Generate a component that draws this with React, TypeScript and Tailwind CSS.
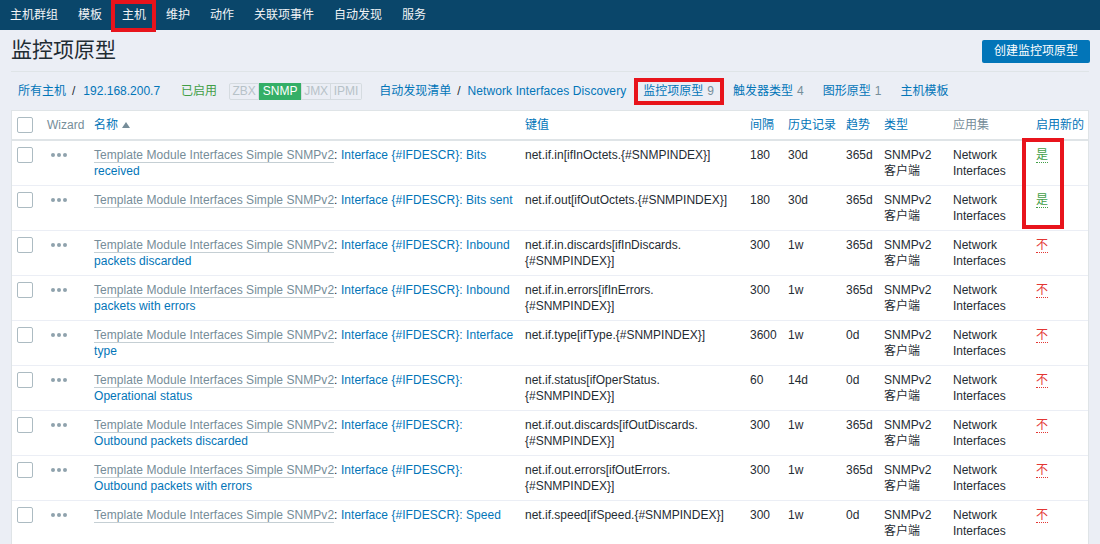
import React from "react";

type Row = {
  name: string;
  key: string;
  interval: string;
  history: string;
  trends: string;
  enabled: boolean;
};

const rows: Row[] = [
  { name: "Interface {#IFDESCR}: Bits received", key: "net.if.in[ifInOctets.{#SNMPINDEX}]", interval: "180", history: "30d", trends: "365d", enabled: true },
  { name: "Interface {#IFDESCR}: Bits sent", key: "net.if.out[ifOutOctets.{#SNMPINDEX}]", interval: "180", history: "30d", trends: "365d", enabled: true },
  { name: "Interface {#IFDESCR}: Inbound packets discarded", key: "net.if.in.discards[ifInDiscards.{#SNMPINDEX}]", interval: "300", history: "1w", trends: "365d", enabled: false },
  { name: "Interface {#IFDESCR}: Inbound packets with errors", key: "net.if.in.errors[ifInErrors.{#SNMPINDEX}]", interval: "300", history: "1w", trends: "365d", enabled: false },
  { name: "Interface {#IFDESCR}: Interface type", key: "net.if.type[ifType.{#SNMPINDEX}]", interval: "3600", history: "1w", trends: "0d", enabled: false },
  { name: "Interface {#IFDESCR}: Operational status", key: "net.if.status[ifOperStatus.{#SNMPINDEX}]", interval: "60", history: "14d", trends: "0d", enabled: false },
  { name: "Interface {#IFDESCR}: Outbound packets discarded", key: "net.if.out.discards[ifOutDiscards.{#SNMPINDEX}]", interval: "300", history: "1w", trends: "365d", enabled: false },
  { name: "Interface {#IFDESCR}: Outbound packets with errors", key: "net.if.out.errors[ifOutErrors.{#SNMPINDEX}]", interval: "300", history: "1w", trends: "365d", enabled: false },
  { name: "Interface {#IFDESCR}: Speed", key: "net.if.speed[ifSpeed.{#SNMPINDEX}]", interval: "300", history: "1w", trends: "0d", enabled: false },
];

const navItems = ["主机群组", "模板", "主机", "维护", "动作", "关联项事件", "自动发现", "服务"];

function Checkbox() {
  return <div className="w-[16px] h-[16px] border border-[#acbbc2] rounded-[2px] bg-white" />;
}

function Dots() {
  return (
    <svg width="16" height="16" viewBox="0 0 16 16" className="block">
      <circle cx="2" cy="8" r="2" fill="#8fa2ad" />
      <circle cx="8" cy="8" r="2" fill="#8fa2ad" />
      <circle cx="14" cy="8" r="2" fill="#8fa2ad" />
    </svg>
  );
}

export default function App() {
  return (
    <div className="w-[1100px] h-[544px] overflow-hidden bg-[#ebeef5] text-[12px] leading-[16px] text-[#1f2c33] font-['Liberation_Sans','Noto_Sans_CJK_SC',Arial,sans-serif]">
      {/* top nav */}
      <nav className="h-[30px] bg-[#0a466a] flex items-stretch">
        {navItems.map((item) => (
          <div key={item} className="relative px-[10px] flex items-center text-[#f2f4f6]">
            {item}
            {item === "主机" && (
              <div className="absolute left-[-1px] top-0 w-[45px] h-[32px] border-[4px] border-[#e8141c]" />
            )}
          </div>
        ))}
      </nav>

      {/* header title */}
      <div className="h-[41px] flex items-center justify-between pl-[11px] pr-[10px]">
        <h1 className="text-[21px] leading-[24px] text-[#1f2c33] mt-[-1px]">监控项原型</h1>
        <button className="h-[23px] px-[12px] mt-[1px] bg-[#0275b8] rounded-[2px] text-white text-[12px] flex items-center">
          创建监控项原型
        </button>
      </div>

      {/* breadcrumbs */}
      <div className="mx-[11px] border-t border-[#dfe4e7] h-[39px] flex items-center pl-[7px]">
        <span className="text-[#0275b8]">所有主机</span>
        <span className="ml-[6px] mr-[8px] text-[#1f2c33]">/</span>
        <span className="text-[#0275b8]">192.168.200.7</span>
        <span className="ml-[21px] text-[#429e47]">已启用</span>
        <div className="ml-[12px] flex h-[17px]">
          <span className="w-[30px] flex items-center justify-center border border-[#d5dbe0] bg-[#ebeef5] text-[#b7c2c8] rounded-l-[2px]">ZBX</span>
          <span className="w-[42px] flex items-center justify-center bg-[#34af67] text-white">SNMP</span>
          <span className="w-[30px] flex items-center justify-center border border-[#d5dbe0] bg-[#ebeef5] text-[#b7c2c8]">JMX</span>
          <span className="w-[31px] flex items-center justify-center border border-l-0 border-[#d5dbe0] bg-[#ebeef5] text-[#b7c2c8] rounded-r-[2px]">IPMI</span>
        </div>
        <span className="ml-[17px] text-[#0275b8]">自动发现清单</span>
        <span className="ml-[6px] mr-[7px] text-[#1f2c33]">/</span>
        <span className="text-[#0275b8] tracking-[0.1px]">Network Interfaces Discovery</span>
        <div className="ml-[8px] h-[27px] pl-[5px] pr-[6px] flex items-center border-[4px] border-[#e8141c]">
          <span className="text-[#0275b8]">监控项原型</span>
          <span className="ml-[4px] text-[#768d99]">9</span>
        </div>
        <span className="ml-[9px] text-[#0275b8]">触发器类型</span>
        <span className="ml-[4px] text-[#768d99]">4</span>
        <span className="ml-[19px] text-[#0275b8]">图形原型</span>
        <span className="ml-[4px] text-[#768d99]">1</span>
        <span className="ml-[19px] text-[#0275b8]">主机模板</span>
      </div>

      {/* table */}
      <div className="relative mx-[11px] bg-white border border-[#dfe4e7]">
        <table className="w-full table-fixed border-collapse">
          <colgroup>
            <col className="w-[30px]" />
            <col className="w-[47px]" />
            <col className="w-[431px]" />
            <col className="w-[225px]" />
            <col className="w-[38px]" />
            <col className="w-[58px]" />
            <col className="w-[38px]" />
            <col className="w-[69px]" />
            <col className="w-[83px]" />
            <col />
          </colgroup>
          <thead>
            <tr className="border-b-2 border-[#dfe4e7]">
              <th className="px-[5px] py-[6px] text-left font-normal align-top"><Checkbox /></th>
              <th className="px-[5px] py-[6px] text-left font-normal text-[#768d99] align-top">Wizard</th>
              <th className="px-[5px] py-[6px] text-left font-normal align-top">
                <span className="inline-flex items-center text-[#0275b8]">
                  名称
                  <svg width="10" height="8" viewBox="0 0 10 8" className="ml-[3px]">
                    <path d="M1 7 L5 1 L9 7 Z" fill="#768d99" />
                  </svg>
                </span>
              </th>
              <th className="px-[5px] py-[6px] text-left font-normal text-[#0275b8] align-top">键值</th>
              <th className="px-[5px] py-[6px] text-left font-normal text-[#0275b8] align-top">间隔</th>
              <th className="px-[5px] py-[6px] text-left font-normal text-[#0275b8] align-top">历史记录</th>
              <th className="px-[5px] py-[6px] text-left font-normal text-[#0275b8] align-top">趋势</th>
              <th className="px-[5px] py-[6px] text-left font-normal text-[#0275b8] align-top">类型</th>
              <th className="px-[5px] py-[6px] text-left font-normal text-[#768d99] align-top">应用集</th>
              <th className="px-[5px] py-[6px] text-left font-normal text-[#0275b8] align-top whitespace-nowrap">启用新的</th>
            </tr>
          </thead>
          <tbody>
            {rows.map((r, i) => (
              <tr key={i} className="border-b border-[#ebeef5]">
                <td className="px-[5px] py-[6px] align-top"><Checkbox /></td>
                <td className="pl-[9px] pr-[5px] py-[6px] align-top"><Dots /></td>
                <td className="px-[5px] py-[6px] align-top tracking-[0.05px]">
                  <span className="text-[#768d99] border-b border-[#c5cfd4]">Template Module Interfaces Simple SNMPv2</span>
                  <span>: </span>
                  <span className="text-[#0275b8]">{r.name}</span>
                </td>
                <td className="px-[5px] py-[6px] align-top">{r.key}</td>
                <td className="px-[5px] py-[6px] align-top">{r.interval}</td>
                <td className="px-[5px] py-[6px] align-top">{r.history}</td>
                <td className="px-[5px] py-[6px] align-top">{r.trends}</td>
                <td className="px-[5px] py-[6px] align-top">SNMPv2 客户端</td>
                <td className="px-[5px] py-[6px] align-top">Network Interfaces</td>
                <td className="px-[5px] py-[6px] align-top">
                  {r.enabled ? (
                    <span className="text-[#429e47] border-b border-dotted border-[#429e47]">是</span>
                  ) : (
                    <span className="text-[#e33734] border-b border-dotted border-[#e33734]">不</span>
                  )}
                </td>
              </tr>
            ))}
          </tbody>
        </table>
        <div className="absolute left-[1010px] top-[27px] w-[42px] h-[91px] border-[4px] border-[#e8141c]" />
      </div>
    </div>
  );
}
